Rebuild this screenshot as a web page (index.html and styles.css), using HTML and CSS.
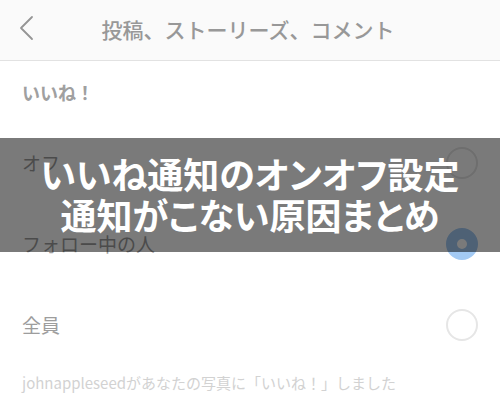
FILE: index.html
```html
<!DOCTYPE html>
<html lang="ja">
<head>
    <meta charset="UTF-8">
    <meta name="viewport" content="width=device-width, initial-scale=1.0">
    <title>いいね通知のオンオフ設定</title>
    <link rel="stylesheet" href="styles.css">
</head>
<body>
    <div class="screen">
        <!-- ナビゲーションバー -->
        <div class="nav">
            <svg class="back" width="16" height="26" viewBox="0 0 16 26">
                <polyline points="13,2 2,13 13,24" fill="none" stroke="#959595" stroke-width="1.8" stroke-linecap="round" stroke-linejoin="round"/>
            </svg>
            <h1 class="nav-title">投稿、ストーリーズ、コメント</h1>
        </div>

        <!-- いいね！の設定 -->
        <div class="section-label">いいね！</div>
        <div class="option">
            <span class="option-label">オフ</span>
            <span class="radio"></span>
        </div>
        <div class="option">
            <span class="option-label">フォロー中の人</span>
            <span class="radio checked"></span>
        </div>
        <div class="option">
            <span class="option-label">全員</span>
            <span class="radio"></span>
        </div>
        <p class="example">johnappleseedがあなたの写真に「いいね！」しました</p>

        <!-- タイトル帯 -->
        <div class="banner">
            <div class="banner-line">いいね通知のオンオフ設定</div>
            <div class="banner-line">通知がこない原因まとめ</div>
        </div>
    </div>
</body>
</html>
```

FILE: styles.css
```css
* {
    margin: 0;
    padding: 0;
    box-sizing: border-box;
}

body {
    font-family: "Noto Sans CJK JP", "Noto Sans", sans-serif;
    background: #fff;
    width: 500px;
    height: 400px;
    overflow: hidden;
}

.screen {
    position: relative;
    height: 400px;
}

.nav {
    position: relative;
    height: 61px;
    background: #fafafa;
    border-bottom: 1px solid #e2e2e2;
    display: flex;
    align-items: center;
    justify-content: center;
}

.back {
    position: absolute;
    left: 19px;
    top: 15px;
}

.nav-title {
    font-size: 21px;
    font-weight: 500;
    color: #989898;
    margin-top: -3px;
    margin-left: -4px;
}

.section-label {
    height: 61px;
    padding-left: 22px;
    display: flex;
    align-items: center;
    font-size: 18px;
    font-weight: 700;
    color: #a0a0a0;
}

.option {
    height: 81px;
    padding: 0 22px;
    display: flex;
    align-items: center;
    justify-content: space-between;
}

.option-label {
    font-size: 19px;
    color: #9d9d9d;
}

.radio {
    width: 32px;
    height: 32px;
    border-radius: 50%;
    border: 2px solid #e6e6e6;
}

.radio.checked {
    border: 11px solid #a3caf4;
    background: #fff;
}

.example {
    padding: 7px 22px 0;
    font-size: 15px;
    color: #d2d2d2;
}

.banner {
    position: absolute;
    left: 0;
    right: 0;
    top: 138px;
    height: 114px;
    background: rgba(0, 0, 0, 0.52);
    display: flex;
    flex-direction: column;
    justify-content: center;
    align-items: center;
}

.banner-line {
    color: #fff;
    font-size: 36px;
    font-weight: 700;
    line-height: 44px;
    font-feature-settings: "palt";
    margin-top: -3px;
}
```
